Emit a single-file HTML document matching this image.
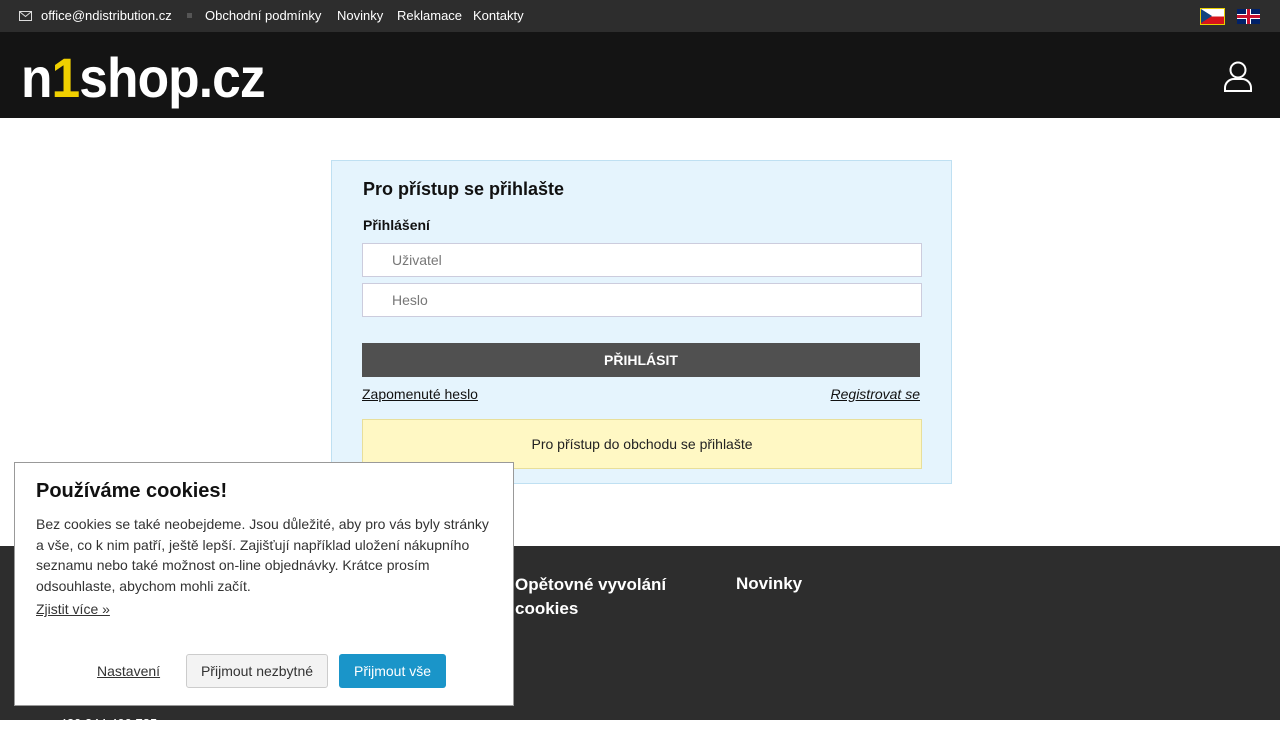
<!DOCTYPE html>
<html><head><meta charset="utf-8"><style>
*{box-sizing:border-box;margin:0;padding:0}
body{width:1280px;height:720px;overflow:hidden;background:#fff;font-family:"Liberation Sans",sans-serif;position:relative}
.top{height:32px;background:#2d2d2d;color:#fff;font-size:13px;position:relative}
.top span{position:absolute;top:8px}
.head{height:86px;background:#141414;position:relative}
.logo{position:absolute;left:21px;top:18px;font:bold 56px/1 "Liberation Sans",sans-serif;color:#fff;letter-spacing:-1px;transform:scaleX(0.92);transform-origin:left}
.box{position:absolute;left:331px;top:160px;width:621px;height:324px;background:#e5f4fd;border:1px solid #bfe0f2}
input{position:absolute;left:30px;width:560px;height:34px;border:1px solid #ccd;background:#fff;padding-left:29px;font:14px "Liberation Sans",sans-serif;color:#777}
.btn{position:absolute;left:30px;top:182px;width:558px;height:34px;background:#505050;color:#fff;font-weight:bold;font-size:14px;text-align:center;line-height:34px}
.foot{position:absolute;top:546px;left:0;width:1280px;height:174px;background:#2d2d2d;color:#fff;font-weight:bold;font-size:17px}
.ck{position:absolute;left:14px;top:462px;width:500px;height:244px;background:#fff;border:1px solid #999;color:#333}
</style></head><body>
<div class="top">
<svg style="position:absolute;left:19px;top:11px" width="13" height="10"><rect x="0.5" y="0.5" width="12" height="9" fill="none" stroke="#ddd"/><path d="M1 1l5.5 4.5L12 1" fill="none" stroke="#ddd"/></svg>
<span style="left:41px">office@ndistribution.cz</span>
<span style="left:187px;top:13px;width:5px;height:5px;background:#555"></span>
<span style="left:205px">Obchodní podmínky</span><span style="left:337px">Novinky</span><span style="left:397px">Reklamace</span><span style="left:473px">Kontakty</span>
<div style="position:absolute;left:1200px;top:8px;width:25px;height:17px;border:1px solid #e8d000;background:linear-gradient(#fff 50%,#d7141a 50%)"><div style="width:0;height:0;border-top:7.5px solid transparent;border-bottom:7.5px solid transparent;border-left:11px solid #11457e"></div></div>
<div style="position:absolute;left:1237px;top:9px;width:23px;height:15px;background:#012169;overflow:hidden"><div style="position:absolute;left:9px;top:0;width:5px;height:15px;background:#fff"></div><div style="position:absolute;left:0;top:5px;width:23px;height:5px;background:#fff"></div><div style="position:absolute;left:10px;top:0;width:3px;height:15px;background:#c8102e"></div><div style="position:absolute;left:0;top:6px;width:23px;height:3px;background:#c8102e"></div></div>
</div>
<div class="head">
<div class="logo">n<span style="color:#f0d000">1</span>shop.cz</div>
<svg style="position:absolute;left:1223px;top:28px" width="30" height="32"><circle cx="15" cy="10" r="7.5" fill="none" stroke="#fff" stroke-width="2"/><path d="M2 31v-3a9 9 0 0 1 9-9h8a9 9 0 0 1 9 9v3z" fill="none" stroke="#fff" stroke-width="2"/></svg>
</div>
<div class="box">
<div style="position:absolute;left:31px;top:18px;font-weight:bold;font-size:18px;color:#111">Pro přístup se přihlašte</div>
<div style="position:absolute;left:31px;top:56px;font-weight:bold;font-size:14px;color:#111">Přihlášení</div>
<input style="top:82px" value="Uživatel"><input style="top:122px" value="Heslo">
<div class="btn">PŘIHLÁSIT</div>
<div style="position:absolute;left:30px;top:225px;font-size:14px;text-decoration:underline;color:#111">Zapomenuté heslo</div>
<div style="position:absolute;right:31px;top:225px;font-size:14px;text-decoration:underline;font-style:italic;color:#111">Registrovat se</div>
<div style="position:absolute;left:30px;top:258px;width:560px;height:50px;background:#fff8c4;border:1px solid #e8df9a;text-align:center;line-height:48px;font-size:14px;color:#222">Pro přístup do obchodu se přihlašte</div>
</div>
<div class="foot">
<div style="position:absolute;left:515px;top:27px;line-height:24px">Opětovné vyvolání<br>cookies</div>
<div style="position:absolute;left:736px;top:28px">Novinky</div>
<div style="position:absolute;left:52px;top:170px;font-size:13px;font-weight:normal">+420 244 400 785</div>
</div>
<div class="ck">
<div style="position:absolute;left:21px;top:17px;font-weight:bold;font-size:20px;color:#111">Používáme cookies!</div>
<div style="position:absolute;left:21px;top:51px;width:462px;font-size:14px;line-height:20.5px">Bez cookies se také neobejdeme. Jsou důležité, aby pro vás byly stránky a vše, co k nim patří, ještě lepší. Zajišťují například uložení nákupního seznamu nebo také možnost on-line objednávky. Krátce prosím odsouhlaste, abychom mohli začít.</div>
<div style="position:absolute;left:21px;top:138px;font-size:14px;text-decoration:underline">Zjistit více »</div>
<div style="position:absolute;left:82px;top:200px;font-size:14px;text-decoration:underline">Nastavení</div>
<div style="position:absolute;left:171px;top:191px;width:142px;height:34px;border:1px solid #ccc;border-radius:3px;background:#f3f3f3;text-align:center;line-height:32px;font-size:14px">Přijmout nezbytné</div>
<div style="position:absolute;left:324px;top:191px;width:107px;height:34px;border-radius:3px;background:#1a95c9;color:#fff;text-align:center;line-height:34px;font-size:14px">Přijmout vše</div>
</div>
</body></html>
